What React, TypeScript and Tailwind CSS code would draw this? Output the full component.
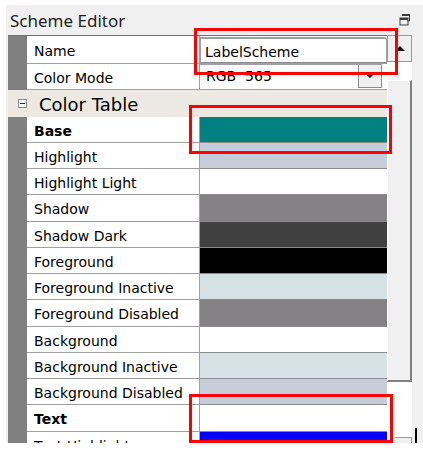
import React from "react";

const rows: { label: string; color: string; bold?: boolean }[] = [
  { label: "Base", color: "#008080", bold: true },
  { label: "Highlight", color: "#c6cdd6" },
  { label: "Highlight Light", color: "#ffffff" },
  { label: "Shadow", color: "#848284" },
  { label: "Shadow Dark", color: "#404040" },
  { label: "Foreground", color: "#000000" },
  { label: "Foreground Inactive", color: "#d5e1e5" },
  { label: "Foreground Disabled", color: "#848284" },
  { label: "Background", color: "#ffffff" },
  { label: "Background Inactive", color: "#d6e2e6" },
  { label: "Background Disabled", color: "#c6cdd6" },
  { label: "Text", color: "#ffffff", bold: true },
  { label: "Text Highlight", color: "#0000ff" },
];

function Label({ text, bold }: { text: string; bold?: boolean }) {
  return (
    <div className="flex w-[173px] items-center border-r border-b border-[#a0a0a0] bg-white pt-[3px] pl-[7px]">
      <span className={bold ? "font-bold" : ""}>{text}</span>
    </div>
  );
}

function RestoreIcon() {
  return (
    <svg width="12" height="13" viewBox="0 0 12 13" className="text-[#3c3c3c]">
      <path d="M3.5 1.5h7v6.5h-2" fill="none" stroke="currentColor" strokeWidth="1" />
      <rect x="3" y="1" width="8" height="2" fill="currentColor" />
      <rect x="1" y="5" width="8" height="7" fill="none" stroke="currentColor" strokeWidth="1" />
      <rect x="1" y="5" width="8" height="2" fill="currentColor" />
    </svg>
  );
}

export default function App() {
  return (
    <div className="relative h-[450px] w-[423px] overflow-hidden bg-white text-[14px] leading-none text-black [font-family:'DejaVu_Sans',sans-serif]">
      <div className="ml-[6px] mt-[5px] flex h-[438px] flex-col overflow-hidden bg-[#f0f0f0]">
        {/* title */}
        <div className="flex h-[30px] shrink-0 items-center justify-between pl-[4px] pr-[12px]">
          <span className="text-[17px] text-[#1e1e1e] [font-family:'Noto_Sans',sans-serif]">Scheme Editor</span>
          <div className="mb-[2px]">
            <RestoreIcon />
          </div>
        </div>

        <div className="flex flex-1 overflow-hidden pl-[2px]">
          {/* property grid */}
          <div className="flex w-[379px] shrink-0 flex-col border-t border-[#6f6f6f]">
            <div className="flex h-[28px] shrink-0">
              <div className="w-[19px] bg-[#808080]" />
              <Label text="Name" />
              <div className="flex flex-1 items-end border-b border-[#a0a0a0] bg-white">
                <div className="flex h-[26px] w-full items-center rounded-tr-[3px] border border-t-2 border-[#a0a0a0] border-b-[#8c8c8c] bg-white pt-[2px] pl-[4px]">
                  LabelScheme
                </div>
              </div>
            </div>
            <div className="flex h-[26.25px] shrink-0">
              <div className="w-[19px] bg-[#808080]" />
              <Label text="Color Mode" />
              <div className="flex flex-1 border-b border-[#a0a0a0] bg-white pr-[5px]">
                <div className="flex flex-1 border-t border-[#a0a0a0]">
                  <div className="mt-[2px] h-[22px] flex-1 overflow-hidden pl-[6px]">
                    <div className="mt-[2px] whitespace-pre">RGB  565</div>
                  </div>
                  <div className="flex h-[23px] w-[24px] items-center justify-center border border-t-0 border-[#8c8c8c] bg-[#f0f0f0]">
                    <div className="h-0 w-0 border-x-[4px] border-t-[4px] border-x-transparent border-t-black" />
                  </div>
                </div>
              </div>
            </div>
            <div className="flex h-[26.25px] shrink-0 items-center bg-[#ece9e3]">
              <div className="ml-[10px] flex h-[9px] w-[9px] items-center justify-center border border-[#8a8a8a] bg-white">
                <div className="h-px w-[5px] bg-[#333]" />
              </div>
              <span className="ml-[12px] pt-[3px] text-[18px]">Color Table</span>
            </div>
            {rows.map((r) => (
              <div key={r.label} className="flex h-[26.25px] shrink-0">
                <div className="w-[19px] bg-[#808080]" />
                <Label text={r.label} bold={r.bold} />
                <div className="flex-1 border-b border-[#8c8c8c]" style={{ backgroundColor: r.color }} />
              </div>
            ))}
          </div>

          {/* spin / scroll strip */}
          <div className="flex w-[25px] shrink-0 flex-col">
            <div className="flex h-[27px] shrink-0 items-center justify-center border border-[#9a9a9a] bg-[#f0f0f0]">
              <div className="h-0 w-0 border-x-[5px] border-b-[5px] border-x-transparent border-b-black" />
            </div>
            <div className="h-[18px] shrink-0 bg-white" />
            <div className="h-[302px] shrink-0 border-t border-l border-white border-r-2 border-b-2 border-r-[#808080] border-b-[#808080] bg-[#f0f0f0]" />
            <div className="flex flex-1 items-end justify-end bg-white">
              <div className="h-[6px] w-[17px] border-t border-r border-[#9a9a9a] bg-[#f0f0f0]" />
            </div>
          </div>
          <div className="flex-1" />
        </div>
      </div>

      {/* caret */}
      <div className="absolute left-[415px] top-[428px] h-[15px] w-[1.5px] bg-black" />

      {/* annotations */}
      <div className="absolute left-[194px] top-[28px] h-[47px] w-[204px] border-[3px] border-[#ff0000]" />
      <div className="absolute left-[189px] top-[105px] h-[49px] w-[203px] border-[3px] border-[#ff0000]" />
      <div className="absolute left-[189px] top-[394px] h-[49px] w-[204px] border-[3px] border-[#ff0000]" />
    </div>
  );
}
